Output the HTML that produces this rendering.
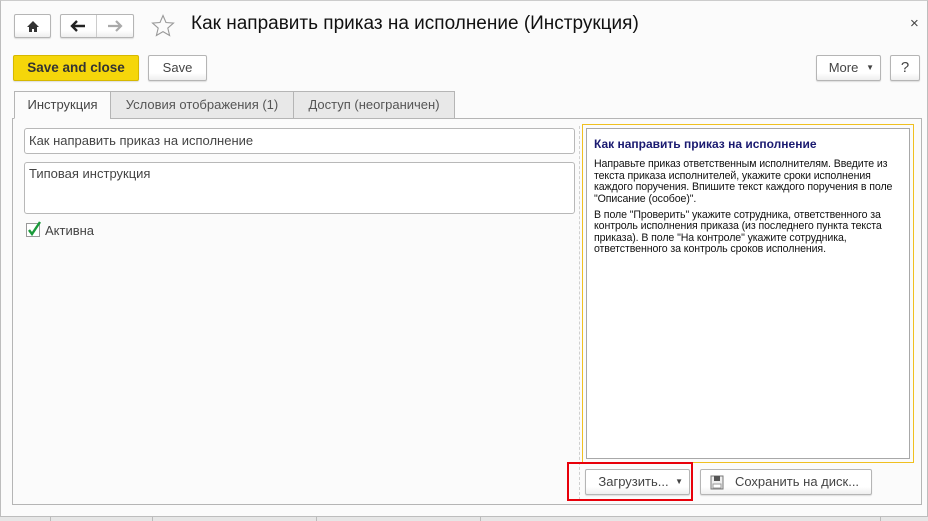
<!DOCTYPE html>
<html><head><meta charset="utf-8"><style>
*{box-sizing:border-box;margin:0;padding:0}
body{width:928px;height:521px;background:#fbfbfb;font-family:Arial,"Liberation Sans","Noto Sans CJK SC",sans-serif;font-size:13px;color:#333;position:relative;overflow:hidden}
.a{position:absolute}
.btn{position:absolute;border:1px solid #b5b5b5;border-radius:2px;background:linear-gradient(#fff 70%,#eee);color:#444;text-align:center;box-shadow:0 1px 1px rgba(0,0,0,.12)}
.in{position:absolute;border:1px solid #b8b8b8;border-radius:3px;background:#fff;padding:4px 4px;color:#444}
.tab{position:absolute;top:91px;height:28px;border:1px solid #b5b5b5;background:#e8e8e8;color:#555;line-height:26px;text-align:center}
p{margin:0}
</style></head><body>
<div class="a" style="left:0;top:0;width:928px;height:517px;border:1px solid #bdbdbd;border-top-color:#ccc"></div>
<div class="a" style="left:0;top:517px;width:928px;height:4px;background:#e6e6e6"></div>
<div class="a" style="left:50px;top:517px;width:1px;height:4px;background:#bbb"></div>
<div class="a" style="left:152px;top:517px;width:1px;height:4px;background:#bbb"></div>
<div class="a" style="left:316px;top:517px;width:1px;height:4px;background:#bbb"></div>
<div class="a" style="left:480px;top:517px;width:1px;height:4px;background:#bbb"></div>
<div class="a" style="left:880px;top:517px;width:1px;height:4px;background:#bbb"></div>

<div class="btn" style="left:14px;top:14px;width:37px;height:24px"><svg width="14" height="13" viewBox="0 0 14 13" style="margin-top:5px"><path d="M7 1L1 7h2v5h3V9h2v3h3V7h2z" fill="#333"/></svg></div>
<div class="btn" style="left:60px;top:14px;width:74px;height:24px"></div>
<div class="a" style="left:96px;top:15px;width:1px;height:22px;background:#ccc"></div>
<svg class="a" style="left:69px;top:19px" width="18" height="14" viewBox="0 0 18 14"><path d="M16 7H4M8 2L3 7l5 5" stroke="#222" stroke-width="2.4" fill="none"/></svg>
<svg class="a" style="left:106px;top:19px" width="18" height="14" viewBox="0 0 18 14"><path d="M2 7h12M10 2l5 5-5 5" stroke="#aaa" stroke-width="2.2" fill="none"/></svg>
<svg class="a" style="left:151px;top:14px" width="24" height="23" viewBox="0 0 24 23"><path d="M12 1.5l3 7 7.5.6-5.7 5 1.8 7.4L12 17.6l-6.6 3.9 1.8-7.4-5.7-5 7.5-.6z" fill="none" stroke="#999" stroke-width="1.1"/></svg>
<div class="a" style="left:191px;top:13px;font-size:19px;color:#111;white-space:nowrap">Как направить приказ на исполнение (Инструкция)</div>
<div class="a" style="left:910px;top:15px;font-size:15px;color:#444">×</div>

<div class="btn" style="left:13px;top:55px;width:126px;height:26px;background:#f5d60a;border-color:#d6b800;color:#333;font-weight:bold;line-height:24px;font-size:13.5px">Save and close</div>
<div class="btn" style="left:148px;top:55px;width:59px;height:26px;line-height:24px">Save</div>
<div class="btn" style="left:816px;top:55px;width:65px;height:26px;line-height:24px;padding-right:10px">More<span class="a" style="right:6px;top:0;font-size:8px">▼</span></div>
<div class="btn" style="left:890px;top:55px;width:30px;height:26px;line-height:24px;font-size:15px">?</div>

<div class="a" style="left:12px;top:118px;width:910px;height:387px;border:1px solid #b5b5b5;background:#fbfbfb"></div>
<div class="tab" style="left:14px;width:97px;background:#fbfbfb;border-bottom-color:#fbfbfb;color:#444">Инструкция</div>
<div class="tab" style="left:110px;width:184px">Условия отображения (1)</div>
<div class="tab" style="left:293px;width:162px">Доступ (неограничен)</div>

<div class="in" style="left:24px;top:128px;width:551px;height:26px;line-height:16px">Как направить приказ на исполнение</div>
<div class="in" style="left:24px;top:162px;width:551px;height:52px;line-height:18px;padding-top:2px">Типовая инструкция</div>
<div class="a" style="left:26px;top:223px;width:14px;height:14px;border:1px solid #999;background:#fff"></div>
<svg class="a" style="left:26px;top:220px" width="16" height="17" viewBox="0 0 16 17"><path d="M3 10l3 4 8-12" stroke="#1a9a3a" stroke-width="2.4" fill="none"/></svg>
<div class="a" style="left:45px;top:223px;color:#444">Активна</div>

<div class="a" style="left:579px;top:126px;width:0;height:374px;border-left:1px dashed #d0d0d0"></div>
<div class="a" style="left:582px;top:124px;width:332px;height:339px;border:1px solid #f0c020"></div>
<div class="a" style="left:586px;top:128px;width:324px;height:331px;border:1px solid #a8a8a8;background:#fff;padding:10px 7px;font-size:10.6px;line-height:11.4px;color:#111;letter-spacing:-0.1px">
<p style="color:#1a1a70;font-weight:bold;font-size:12px;margin-bottom:9px;letter-spacing:0">Как направить приказ на исполнение</p>
<p style="margin-bottom:5px">Направьте приказ ответственным исполнителям. Введите из текста приказа исполнителей, укажите сроки исполнения каждого поручения. Впишите текст каждого поручения в поле "Описание (особое)".</p>
<p>В поле "Проверить" укажите сотрудника, ответственного за контроль исполнения приказа (из последнего пункта текста приказа). В поле "На контроле" укажите сотрудника, ответственного за контроль сроков исполнения.</p>
</div>

<div class="btn" style="left:585px;top:469px;width:105px;height:26px;line-height:24px;padding-right:14px;padding-left:6px">Загрузить...<span class="a" style="right:6px;top:0;font-size:8px">▼</span></div>
<div class="a" style="left:567px;top:462px;width:126px;height:39px;border:2px solid #e8000a"></div>
<div class="btn" style="left:700px;top:469px;width:172px;height:26px;line-height:24px;padding-left:22px"><svg class="a" style="left:9px;top:5px" width="14" height="15" viewBox="0 0 14 15"><rect x="1" y="1" width="12" height="13" fill="#eee" stroke="#777"/><rect x="4" y="1" width="6" height="5" fill="#555"/><rect x="3" y="9" width="8" height="4" fill="#fff" stroke="#999"/></svg>Сохранить на диск...</div>
</body></html>
